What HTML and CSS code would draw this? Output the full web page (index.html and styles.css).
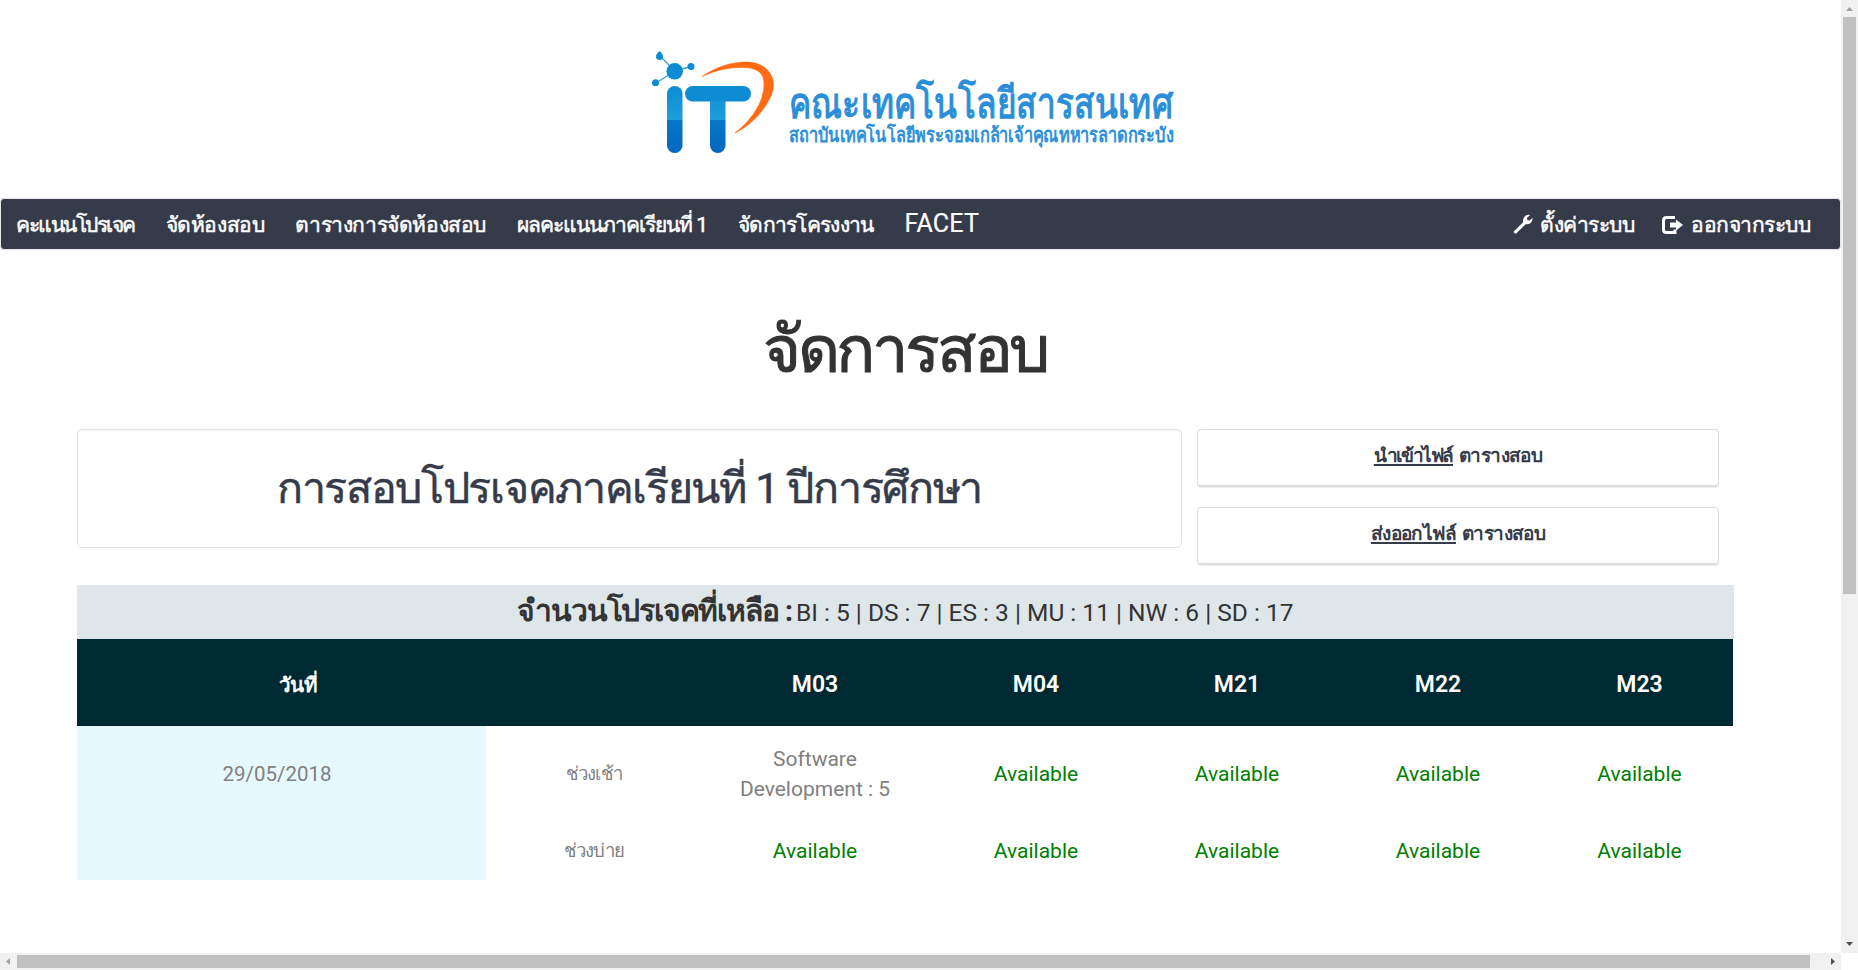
FILE: index.html
```
<!DOCTYPE html>
<html lang="th">
<head>
<meta charset="utf-8">
<title>จัดการสอบ</title>
<link rel="stylesheet" href="styles.css">
</head>
<body>
<div class="window">
  <main class="page">
    <header class="brand">
      <svg class="logo" viewBox="0 0 530 110" width="530" height="110" role="img">
        <defs>
          <linearGradient id="blue" gradientUnits="userSpaceOnUse" x1="0" y1="36" x2="0" y2="103">
            <stop offset="0" stop-color="#0d8bd3"/>
            <stop offset=".5" stop-color="#1f9edb"/>
            <stop offset=".51" stop-color="#0577c9"/>
            <stop offset="1" stop-color="#0468bd"/>
          </linearGradient>
        </defs>
        <path d="M10 6L25 21L41 16.500M25 21L6 33" fill="none" stroke="#3a9ad8" stroke-width="1.300"/>
        <g fill="#0d8bd3">
          <circle cx="24.700" cy="21.300" r="8.300"/>
          <circle cx="9.500" cy="6.500" r="3.500"/><circle cx="9.500" cy="3.500" r="2"/>
          <circle cx="41" cy="16.500" r="3.500"/><circle cx="5.500" cy="32.700" r="3.500"/>
        </g>
        <rect x="17" y="36" width="15.500" height="67" rx="7.700" fill="url(#blue)"/>
        <rect x="60" y="40" width="15.500" height="63" rx="7.700" fill="url(#blue)"/>
        <rect x="35" y="36" width="66" height="15.500" rx="7.700" fill="#0d8bd3"/>
        <path d="M52 26.500C70 14 94 9 108 14C124 20 127 36 119 50C111 65 98 77 85 83C98 73 110 58 113 43C117 24 109 18 94 17.500C80 17 66 20 52 26.500Z" fill="#ff6a13" stroke="#ff6a13" stroke-width=".6"/>
        <text class="logo-name" x="139" y="67.500" textLength="384" lengthAdjust="spacingAndGlyphs">คณะเทคโนโลยีสารสนเทศ</text>
        <text class="logo-sub" x="139" y="92" textLength="385" lengthAdjust="spacingAndGlyphs">สถาบันเทคโนโลยีพระจอมเกล้าเจ้าคุณทหารลาดกระบัง</text>
      </svg>
    </header>

    <nav class="nav">
      <div class="nav-group pages">
        <a class="nav-link scores">คะแนนโปรเจค</a>
        <a class="nav-link rooms">จัดห้องสอบ</a>
        <a class="nav-link timetable">ตารางการจัดห้องสอบ</a>
        <a class="nav-link term">ผลคะแนนภาคเรียนที่ 1</a>
        <a class="nav-link projects">จัดการโครงงาน</a>
        <a class="nav-link facet">FACET</a>
      </div>
      <div class="nav-group account">
        <a class="nav-link"><svg class="icon" viewBox="0 0 20 20" width="20" height="20"><path d="M1 17.300L10.200 8.300C9.400 4.500 11.500 1 15.600.700L17.200 1L14 3.800L14.300 6L16.500 6.500L19.600 4C19.700 8 16.500 10.800 12.600 10.200L3.500 19.200C2.300 20.200 0 18.500 1 17.300Z" fill="#fff"/></svg>ตั้งค่าระบบ</a>
        <a class="nav-link"><svg class="icon" viewBox="0 0 22 18" width="22" height="18"><path d="M13 1.500H4.500Q1.500 1.500 1.500 4.500V13.500Q1.500 16.500 4.500 16.500H13V13.500" fill="none" stroke="#fff" stroke-width="3"/><path d="M8 6.500H14V3.500L21 9L14 14.500V11.500H8Z" fill="#fff"/></svg>ออกจากระบบ</a>
      </div>
    </nav>

    <h1 class="title">จัดการสอบ</h1>

    <section class="panels">
      <div class="panel">การสอบโปรเจคภาคเรียนที่ 1 ปีการศึกษา</div>
      <div class="actions">
        <div class="action import"><u>นำเข้าไฟล์</u><span>ตารางสอบ</span></div>
        <div class="action export"><u>ส่งออกไฟล์</u><span>ตารางสอบ</span></div>
      </div>
    </section>

    <div class="summary"><b>จำนวนโปรเจคที่เหลือ&nbsp;:</b><span>BI : 5 | DS : 7 | ES : 3 | MU : 11 | NW : 6 | SD : 17</span></div>

    <section class="schedule">
      <div class="head">
        <span class="th day">วันที่</span><span></span>
        <span class="th">M03</span><span class="th">M04</span><span class="th">M21</span><span class="th">M22</span><span class="th">M23</span>
      </div>
      <div class="body">
        <div class="date">29/05/2018</div>
        <span class="slot">ช่วงเช้า</span>
        <span>Software<br>Development : 5</span>
        <span class="free">Available</span><span class="free">Available</span><span class="free">Available</span><span class="free">Available</span>
        <span class="slot">ช่วงบ่าย</span>
        <span class="free">Available</span><span class="free">Available</span><span class="free">Available</span><span class="free">Available</span><span class="free">Available</span>
      </div>
    </section>
  </main>

  <div class="vbar">
    <svg width="17" height="17"><path d="M5 11L8.500 7L12 11Z" fill="#a3a3a3"/></svg>
    <i class="vthumb"></i>
    <svg width="17" height="17"><path d="M5 6L8.500 10L12 6Z" fill="#505050"/></svg>
  </div>
  <div class="hbar">
    <svg width="17" height="17"><path d="M10 5L6 8.500L10 12Z" fill="#a3a3a3"/></svg>
    <i class="hthumb"></i>
    <svg width="17" height="17"><path d="M7 5L11 8.500L7 12Z" fill="#505050"/></svg>
  </div>
</div>
</body>
</html>
```
FILE: styles.css
```
* { box-sizing: border-box; }
body { margin: 0; background: #fff; font-family: Roboto, "Noto Sans", sans-serif; overflow: hidden; }
.window { display: grid; grid-template-columns: 1841px 17px; grid-template-rows: 953px 17px; width: 1858px; height: 970px; }
.page { overflow: hidden; }

.brand { height: 198px; padding: 50px 0 0 650px; }
.logo { display: block; overflow: visible; }
.logo-name { font-size: 42px; fill: #2a8fd8; stroke: #2a8fd8; stroke-width: 1.3; }
.logo-sub { font-size: 20px; fill: #2a8fd8; stroke: #2a8fd8; stroke-width: .8; }

.nav { display: flex; justify-content: space-between; height: 52px; padding: 2px 30px 0 15px; background: #363b4a; border: 1px solid #e7e7e7; border-radius: 4px; }
.nav-group { display: flex; align-items: baseline; gap: 31px; }
.nav-link { color: #fff; font-size: 21px; line-height: 48px; white-space: nowrap; letter-spacing: -.5px; -webkit-text-stroke: .5px #fff; }
.pages .nav-link { line-height: 46px; }
.account { gap: 28px; }
.pages .scores { letter-spacing: -1.5px; }
.rooms { letter-spacing: -.4px; }
.timetable { letter-spacing: -.4px; }
.pages .term { letter-spacing: -1px; }
.pages .projects { letter-spacing: -.7px; }
.pages .facet { font-size: 25px; letter-spacing: .2px; -webkit-text-stroke-width: .2px; }
.icon { margin-right: 7px; vertical-align: -2px; }

.title { margin: 61px 0 0; padding-right: 31px; color: #333; font-size: 65px; line-height: 78px; height: 80px; font-weight: 400; text-align: center; letter-spacing: -3.2px; -webkit-text-stroke: 1px #333; }

.panels { display: grid; grid-template-columns: 1105px 522px; gap: 15px; align-items: start; margin: 38px 0 0 77px; }
.panel { height: 119px; border: 1px solid #e3e3e3; border-radius: 5px; box-shadow: inset 0 1px 1px rgba(0,0,0,.05); color: #363b4a; font-size: 43px; line-height: 117px; letter-spacing: -1.3px; text-align: center; white-space: nowrap; -webkit-text-stroke: .5px #363b4a; }
.actions { display: grid; gap: 20px; }
.action { display: flex; justify-content: center; gap: 6px; height: 58px; padding-top: 13px; border: 1px solid #ddd; border-bottom-width: 2px; border-radius: 4px; box-shadow: 0 1px 1px rgba(0,0,0,.08); color: #363b4a; font-size: 19px; font-weight: 700; line-height: 25px; letter-spacing: -.6px; }
.action u { text-decoration-thickness: 2px; text-underline-offset: 2px; text-decoration-skip-ink: none; }
.import u { letter-spacing: -1.4px; }

.summary { display: flex; justify-content: center; align-items: baseline; gap: 4px; width: 1657px; height: 54px; margin: 20px 0 0 77px; background: #dee6e9; color: #333; line-height: 52px; white-space: nowrap; }
.summary b { font-size: 30px; letter-spacing: -1.2px; }
.summary span { font-size: 24.500px; }

.schedule { width: 1656px; margin-left: 77px; }
.head, .body { display: grid; text-align: center; }
.head { grid-template-columns: 442px 183px 226px 216px 186px 216px 187px; height: 87px; padding-top: 4px; background: #002a33; border-bottom: 1px solid #00222a; color: #fff; line-height: 84px; }
.th { font-size: 23px; font-weight: 600; }
.day { font-size: 20.500px; letter-spacing: -.5px; }
.body { grid-template-columns: 409px 216px 226px 216px 186px 216px 187px; grid-template-rows: 96px 58px; align-items: center; color: #808080; font-size: 21px; line-height: 30px; }
.date { grid-row: span 2; align-self: stretch; padding: 33px 9px 0 0; background: #e6f9fe; font-size: 20.500px; }
.slot { font-size: 18.500px; letter-spacing: -.8px; }
.free { color: #008000; }

.vbar, .hbar { display: flex; background: #f1f1f1; }
.vbar { flex-direction: column; }
.hbar { width: 1841px; }
.vbar svg, .hbar svg { display: block; flex: none; }
.vbar svg:last-child { margin-top: auto; }
.hbar svg:last-child { margin-left: auto; }
.vthumb { width: 13px; height: 577px; margin: 0 2px; background: #c1c1c1; }
.hthumb { width: 1793px; height: 13px; margin: 2px 0; background: #c1c1c1; }
```
